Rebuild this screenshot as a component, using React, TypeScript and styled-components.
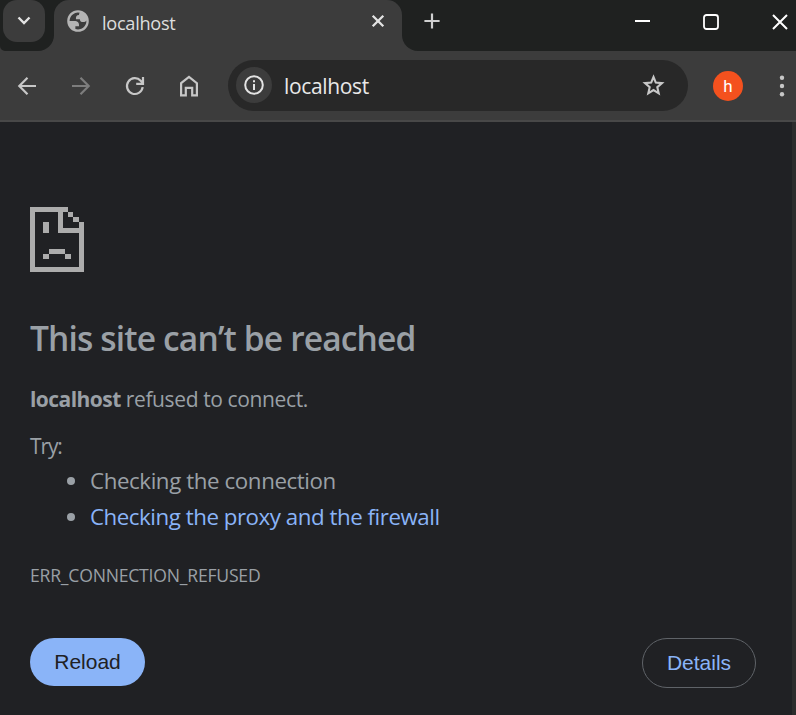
import React from 'react';
import styled, { createGlobalStyle } from 'styled-components';

const GlobalStyle = createGlobalStyle`
  * { box-sizing: border-box; }
  html, body { margin: 0; padding: 0; background: #202124; }
  body { overflow: hidden; }
`;

const uiFont = '"Open Sans", "Segoe UI", sans-serif';

const Window = styled.div`
  width: 796px;
  height: 715px;
  display: flex;
  flex-direction: column;
  background: #202124;
  font-family: ${uiFont};
`;

const Icon = styled.svg`
  display: block;
  flex: none;
  overflow: visible;
`;

const TabStrip = styled.div`
  height: 51px;
  flex: none;
  display: flex;
  background: #3c3c3c;
`;

const StripStart = styled.div`
  width: 54px;
  padding-left: 3px;
  background: #1f2120;
  border-radius: 0 0 16px 5px;
`;

const TabSearch = styled.button`
  width: 42px;
  height: 42px;
  padding: 0;
  border: 0;
  border-radius: 14px;
  background: #3c3c3c;
  display: grid;
  place-items: center;
`;

const TabSlot = styled.div`
  width: 348px;
  background: linear-gradient(#1f2120 20px, #3c3c3c 20px);
`;

const Tab = styled.div`
  height: 51px;
  padding: 10px 17px 0 13px;
  display: flex;
  align-items: flex-start;
  border-radius: 15px 15px 0 0;
  background: #3c3c3c;
`;

const TabTitle = styled.span`
  flex: 1;
  margin: -1px 0 0 13px;
  font-size: 18.2px;
  line-height: 28px;
  letter-spacing: -0.3px;
  color: #dedede;
`;

const TabClose = styled.button`
  padding: 0;
  margin: 4px 0 0;
  border: 0;
  background: none;
`;

const StripEnd = styled.div`
  flex: 1;
  display: flex;
  align-items: flex-start;
  padding: 13px 8px 0 22px;
  background: #1f2120;
  border-radius: 0 0 0 16px;
`;

const WindowControls = styled.div`
  margin: 1px 0 0 auto;
  display: flex;
  gap: 53px;
`;

const Toolbar = styled.div`
  height: 71px;
  flex: none;
  display: flex;
  align-items: center;
  padding: 1px 11px 1px 17px;
  background: #3c3c3c;
  border-bottom: 2px solid #484848;
`;

const NavButtons = styled.div`
  display: flex;
  align-items: center;
  gap: 34px;
  padding-top: 1px;
`;

const AddressBar = styled.div`
  width: 460px;
  height: 51px;
  margin: -1px 0 0 29px;
  padding: 0 23px 0 8px;
  display: flex;
  align-items: center;
  border-radius: 26px;
  background: #282828;
`;

const SiteInfo = styled.div`
  width: 36px;
  height: 36px;
  border-radius: 50%;
  background: #3c3c3c;
  display: grid;
  place-items: center;
`;

const Address = styled.span`
  flex: 1;
  margin: 1px 0 0 12px;
  font-size: 21px;
  line-height: 30px;
  letter-spacing: -0.35px;
  color: #e8e8e8;
`;

const Avatar = styled.div`
  width: 30px;
  height: 30px;
  flex: none;
  margin: 0 auto 0 25px;
  border-radius: 50%;
  background: #f4511e;
  color: #fff;
  font: 17px/31px Roboto, sans-serif;
  text-align: center;
`;

const Page = styled.main`
  flex: 1;
  padding: 85px 36px 0 30px;
  border-right: 4px solid #2c2c2c;
  color: #9aa0a6;
`;

const Heading = styled.h1`
  margin: 43px 0 0;
  font-size: 33.5px;
  font-weight: 600;
  line-height: 46px;
  letter-spacing: -0.84px;
`;

const Message = styled.p`
  margin: 23px 0 0;
  font-size: 21px;
  line-height: 30px;
  letter-spacing: -0.38px;

  strong { letter-spacing: -0.55px; }
`;

const Hint = styled.p`
  margin: 17px 0 0;
  font-size: 21px;
  line-height: 30px;
  letter-spacing: -1.1px;
`;

const Suggestions = styled.ul`
  margin: 2px 0 0;
  padding: 0;
  list-style: none;
  font-size: 22.3px;
  line-height: 36px;
  letter-spacing: -0.4px;
`;

const Suggestion = styled.li`
  display: flex;
  align-items: center;

  &::before {
    content: '';
    width: 8px;
    height: 8px;
    margin: 0 15px 0 37px;
    border-radius: 50%;
    background: #9aa0a6;
  }
`;

const Link = styled.a`
  color: #8ab4f8;
  letter-spacing: -0.46px;
`;

const ErrorCode = styled.div`
  margin-top: 27px;
  font-size: 17.6px;
  line-height: 26px;
  letter-spacing: -0.22px;
`;

const Actions = styled.div`
  margin-top: 50px;
  display: flex;
  justify-content: space-between;
  align-items: flex-start;
`;

const Button = styled.button<{ $primary?: boolean }>`
  width: ${p => (p.$primary ? 115 : 114)}px;
  height: ${p => (p.$primary ? 48 : 50)}px;
  padding: 0;
  border: ${p => (p.$primary ? '0' : '1px solid #5f6368')};
  border-radius: 25px;
  background: ${p => (p.$primary ? '#8ab4f8' : 'transparent')};
  color: ${p => (p.$primary ? '#202124' : '#8ab4f8')};
  font: 21px "Liberation Sans", Arial, sans-serif;
`;

const ChevronIcon = () => (
  <Icon width="14" height="10" viewBox="0 0 14 10" fill="none" stroke="#e3e3e3" strokeWidth="2.4">
    <path d="M1.5 1.5 7 7l5.5-5.5" />
  </Icon>
);

const GlobeIcon = () => (
  <Icon width="22" height="22" viewBox="1.5 1.5 21 21" fill="#b4b4b4">
    <path
      fillRule="evenodd"
      d="M12 1.7a10.3 10.3 0 1 0 0 20.6 10.3 10.3 0 0 0 0-20.6ZM4 12h4.4c3.407.022 4.922 1.73 4.543 5.127H9.488v2.47a8.004 8.004 0 0 0 10.498-8.083C19.327 12.504 18.332 13 17 13c-2.137 0-3.206-.916-3.206-2.75h-3.748c-.274-2.728.683-4.092 2.87-4.092 0-.975.327-1.597.811-1.97A8.004 8.004 0 0 0 4 12Z"
    />
  </Icon>
);

const CloseIcon = () => (
  <Icon width="14" height="14" viewBox="0 0 14 14" fill="none" stroke="#e3e3e3" strokeWidth="2.3">
    <path d="m1.7 1.7 10.6 10.6m0-10.6L1.7 12.3" />
  </Icon>
);

const PlusIcon = () => (
  <Icon width="16" height="16" viewBox="0 0 16 16" stroke="#cfcfcf" strokeWidth="2.2">
    <path d="M8 .4v15.2M.4 8h15.2" />
  </Icon>
);

const ArrowIcon = ({ forward = false }: { forward?: boolean }) => (
  <Icon width="20" height="20" viewBox="0 0 20 20" fill="none" stroke={forward ? '#7d7d7d' : '#c7c7c7'} strokeWidth="2.2">
    <path d={forward ? 'M1 10h17M9.5 1.8l8.2 8.2-8.2 8.2' : 'M19 10H2m8.5-8.2L2.3 10l8.2 8.2'} />
  </Icon>
);

const ReloadIcon = () => (
  <Icon width="20" height="20" viewBox="0 0 20 20" fill="none" stroke="#c7c7c7" strokeWidth="2.2">
    <path d="M17.7 11.2A7.9 7.9 0 1 1 15.7 4.7l2 2.2M18 1v6.8h-6.8" />
  </Icon>
);

const HomeIcon = () => (
  <Icon width="20" height="22" viewBox="0 0 20 22" fill="none" stroke="#c7c7c7" strokeWidth="2.2">
    <path d="M2.1 8.2 10 2l7.9 6.2v12.1h-4.7v-7.5H6.8v7.5H2.1z" />
  </Icon>
);

const InfoIcon = () => (
  <Icon width="20" height="20" viewBox="0 0 20 20" fill="none" stroke="#e3e3e3" strokeWidth="2">
    <circle cx="10" cy="10" r="8.8" />
    <path d="M10 9v6M10 5.2v2.1" />
  </Icon>
);

const StarIcon = () => (
  <Icon width="23" height="22" viewBox="0 0 23 22" fill="none" stroke="#c7c7c7" strokeWidth="2.1">
    <path d="m11.5 3 2.3 5.6 6.2.5-4.7 4.1 1.4 6.1-5.2-3.2-5.2 3.2 1.4-6.1L3 9.1l6.2-.5z" />
  </Icon>
);

const MenuIcon = () => (
  <Icon width="6" height="22" viewBox="0 0 6 22" fill="#c7c7c7">
    <circle cx="3" cy="2.8" r="2.2" />
    <circle cx="3" cy="11" r="2.2" />
    <circle cx="3" cy="19.2" r="2.2" />
  </Icon>
);

const MinimizeIcon = () => (
  <Icon width="15" height="16" viewBox="0 0 15 16" fill="#fff"><path d="M0 6h15v2H0z" /></Icon>
);

const MaximizeIcon = () => (
  <Icon width="16" height="16" viewBox="0 0 16 16" fill="none" stroke="#fff" strokeWidth="1.8">
    <rect x="1" y="1" width="14" height="14" rx="2.5" />
  </Icon>
);

const ExitIcon = () => (
  <Icon width="16" height="16" viewBox="0 0 16 16" fill="none" stroke="#fff" strokeWidth="2">
    <path d="m1 1 14 14M15 1 1 15" />
  </Icon>
);

const SadPageIcon = () => (
  <Icon width="54" height="65" viewBox="0 0 54 65" fill="#acacac" shapeRendering="crispEdges">
    <path d="M0 0h38v5H5v55h44V26H28V5h5v16h16v-6h5v50H0z" />
    <path d="M38 5h5v5h-5zM43 10h6v5h-6zM13 15h6v11h-6zM19 42h16v5H19zM13 47h6v5h-6zM35 47h6v5h-6z" />
  </Icon>
);

export default function App() {
  return (
    <Window>
      <GlobalStyle />
      <TabStrip>
        <StripStart>
          <TabSearch aria-label="Search tabs"><ChevronIcon /></TabSearch>
        </StripStart>
        <TabSlot>
          <Tab>
            <GlobeIcon />
            <TabTitle>localhost</TabTitle>
            <TabClose aria-label="Close tab"><CloseIcon /></TabClose>
          </Tab>
        </TabSlot>
        <StripEnd>
          <PlusIcon />
          <WindowControls>
            <MinimizeIcon />
            <MaximizeIcon />
            <ExitIcon />
          </WindowControls>
        </StripEnd>
      </TabStrip>
      <Toolbar>
        <NavButtons>
          <ArrowIcon />
          <ArrowIcon forward />
          <ReloadIcon />
          <HomeIcon />
        </NavButtons>
        <AddressBar>
          <SiteInfo><InfoIcon /></SiteInfo>
          <Address>localhost</Address>
          <StarIcon />
        </AddressBar>
        <Avatar>h</Avatar>
        <MenuIcon />
      </Toolbar>
      <Page>
        <SadPageIcon />
        <Heading>This site can’t be reached</Heading>
        <Message><strong>localhost</strong> refused to connect.</Message>
        <Hint>Try:</Hint>
        <Suggestions>
          <Suggestion>Checking the connection</Suggestion>
          <Suggestion><Link>Checking the proxy and the firewall</Link></Suggestion>
        </Suggestions>
        <ErrorCode>ERR_CONNECTION_REFUSED</ErrorCode>
        <Actions>
          <Button $primary>Reload</Button>
          <Button>Details</Button>
        </Actions>
      </Page>
    </Window>
  );
}
